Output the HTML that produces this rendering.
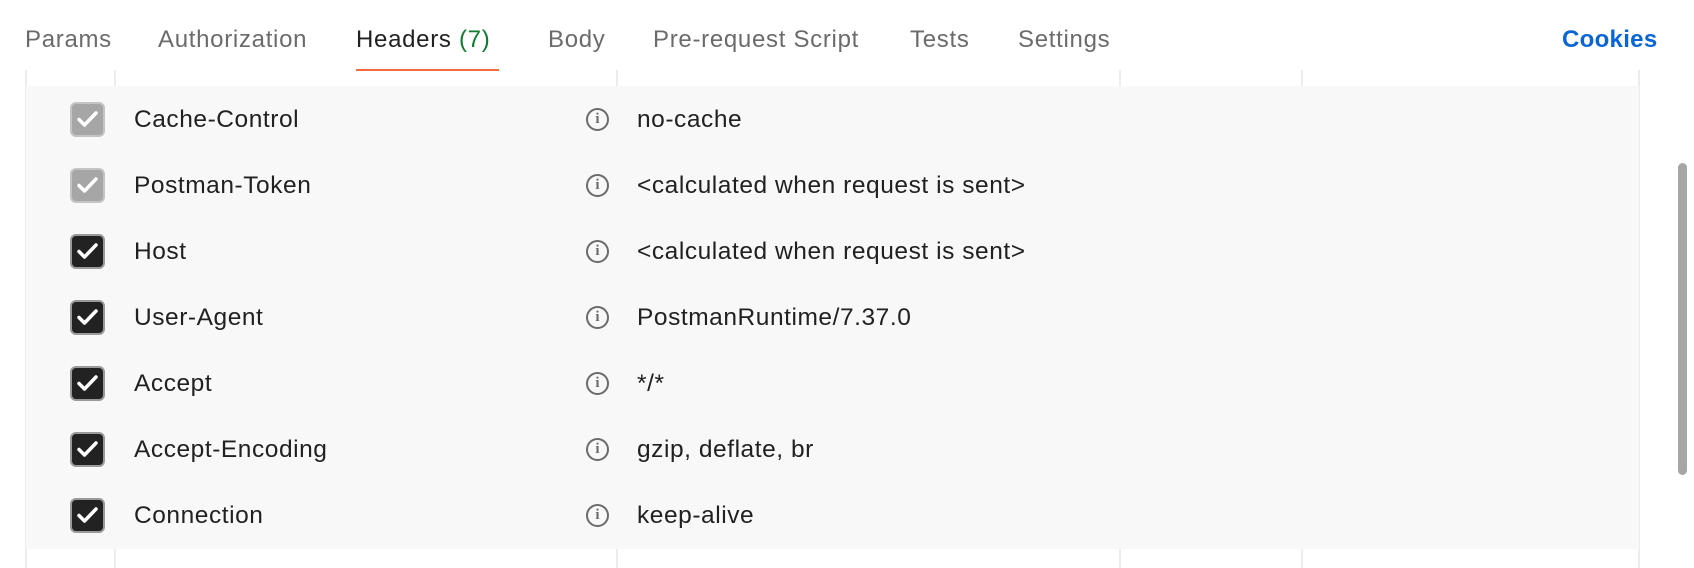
<!DOCTYPE html>
<html><head><meta charset="utf-8"><style>
*{margin:0;padding:0;box-sizing:border-box}
body{width:1694px;height:568px;background:#fff;font-family:"Liberation Sans",Arial,sans-serif;position:relative;overflow:hidden;color:#212121}
.tab{position:absolute;top:26px;font-size:24px;letter-spacing:0.7px;color:#6b6b6b;white-space:nowrap}
.tab.active{color:#212121}
.ul{position:absolute;left:356px;top:69px;width:143px;height:2px;background:#f26b3a}
.vline{position:absolute;width:2px;background:#ededed;top:70px;height:498px}
.bg{position:absolute;left:26px;top:86px;width:1613px;height:463px;background:#f8f8f8}
.row{position:absolute;left:0;height:66px;width:1639px}
.cb{position:absolute;left:70px;width:35px;height:35px;border-radius:6px;border:2px solid #9a9a9a;background:#222}
.cb.g{background:#a6a6a6;border-color:#c4c4c4}
.cb svg{position:absolute;left:5px;top:6px}
.k{position:absolute;left:134px;font-size:24.5px;letter-spacing:0.55px;top:20px}
.v{position:absolute;left:637px;font-size:24.5px;letter-spacing:0.55px;top:20px}
.i{position:absolute;left:586px;top:22px;width:23px;height:23px;border:2px solid #6b6b6b;border-radius:50%;font-size:15px;font-weight:bold;color:#6b6b6b;text-align:center;line-height:19px;font-family:"Liberation Serif",serif}
.sb{position:absolute;left:1678px;top:163px;width:9px;height:312px;border-radius:5px;background:#a6a6a6}
</style></head><body>
<div class="tab" style="left:25px">Params</div>
<div class="tab" style="left:158px">Authorization</div>
<div class="tab active" style="left:356px">Headers <span style="color:#0b7d2c">(7)</span></div>
<div class="tab" style="left:548px">Body</div>
<div class="tab" style="left:653px">Pre-request Script</div>
<div class="tab" style="left:910px">Tests</div>
<div class="tab" style="left:1018px">Settings</div>
<div class="tab" style="left:1562px;color:#0a66d6;font-weight:bold;letter-spacing:0.3px">Cookies</div>
<div class="ul"></div>
<div class="vline" style="left:25px"></div>
<div class="vline" style="left:114px"></div>
<div class="vline" style="left:616px"></div>
<div class="vline" style="left:1119px"></div>
<div class="vline" style="left:1301px"></div>
<div class="vline" style="left:1638px"></div>
<div class="bg"></div>
<div class="sb"></div>

<div class="row" style="top:86px"><div class="cb g" style="top:16px"><svg width="21" height="18" viewBox="0 0 21 18"><path d="M2 9.5l5.5 5.5L19 3" fill="none" stroke="#fff" stroke-width="3.5" stroke-linecap="round" stroke-linejoin="round"/></svg></div><div class="k">Cache-Control</div><div class="i">i</div><div class="v">no-cache</div></div>
<div class="row" style="top:152px"><div class="cb g" style="top:16px"><svg width="21" height="18" viewBox="0 0 21 18"><path d="M2 9.5l5.5 5.5L19 3" fill="none" stroke="#fff" stroke-width="3.5" stroke-linecap="round" stroke-linejoin="round"/></svg></div><div class="k">Postman-Token</div><div class="i">i</div><div class="v">&lt;calculated when request is sent&gt;</div></div>
<div class="row" style="top:218px"><div class="cb" style="top:16px"><svg width="21" height="18" viewBox="0 0 21 18"><path d="M2 9.5l5.5 5.5L19 3" fill="none" stroke="#fff" stroke-width="3.5" stroke-linecap="round" stroke-linejoin="round"/></svg></div><div class="k">Host</div><div class="i">i</div><div class="v">&lt;calculated when request is sent&gt;</div></div>
<div class="row" style="top:284px"><div class="cb" style="top:16px"><svg width="21" height="18" viewBox="0 0 21 18"><path d="M2 9.5l5.5 5.5L19 3" fill="none" stroke="#fff" stroke-width="3.5" stroke-linecap="round" stroke-linejoin="round"/></svg></div><div class="k">User-Agent</div><div class="i">i</div><div class="v">PostmanRuntime/7.37.0</div></div>
<div class="row" style="top:350px"><div class="cb" style="top:16px"><svg width="21" height="18" viewBox="0 0 21 18"><path d="M2 9.5l5.5 5.5L19 3" fill="none" stroke="#fff" stroke-width="3.5" stroke-linecap="round" stroke-linejoin="round"/></svg></div><div class="k">Accept</div><div class="i">i</div><div class="v">*/*</div></div>
<div class="row" style="top:416px"><div class="cb" style="top:16px"><svg width="21" height="18" viewBox="0 0 21 18"><path d="M2 9.5l5.5 5.5L19 3" fill="none" stroke="#fff" stroke-width="3.5" stroke-linecap="round" stroke-linejoin="round"/></svg></div><div class="k">Accept-Encoding</div><div class="i">i</div><div class="v">gzip, deflate, br</div></div>
<div class="row" style="top:482px"><div class="cb" style="top:16px"><svg width="21" height="18" viewBox="0 0 21 18"><path d="M2 9.5l5.5 5.5L19 3" fill="none" stroke="#fff" stroke-width="3.5" stroke-linecap="round" stroke-linejoin="round"/></svg></div><div class="k">Connection</div><div class="i">i</div><div class="v">keep-alive</div></div>
</body></html>
